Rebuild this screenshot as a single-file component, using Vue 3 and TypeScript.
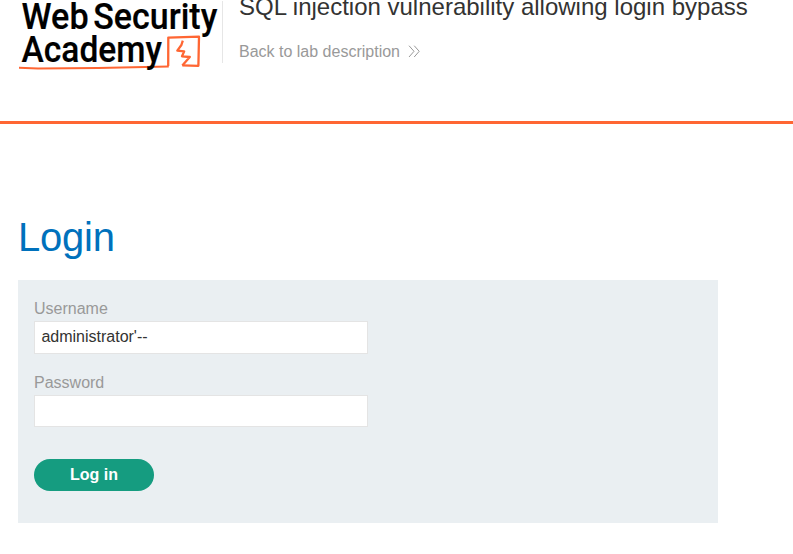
<script setup lang="ts">
import { ref } from 'vue'

const labTitle = 'SQL injection vulnerability allowing login bypass'
const username = ref("administrator'--")
const password = ref('')
</script>

<template>
  <div class="page">
    <header class="lab-header">
      <svg class="logo" width="204" height="76" viewBox="0 0 204 76" role="img" aria-label="Web Security Academy">
        <g class="logo-mark">
          <path d="M150.2 66 L150.3 37.6 L181 36.7 L180.4 65.8 L164.3 65.4" />
          <path class="underline" d="M1 67.8 L20 68.5 L80 68.1 L150.8 66.4" />
          <path class="bolt" d="M164.8 40.6 L163.4 45 L159.3 50.6 L166.2 51.4 L164 56.3 L171.8 57 L164.3 65.4" />
        </g>
        <g class="logo-text">
          <text x="3.6" y="29.3" textLength="67" lengthAdjust="spacingAndGlyphs">Web</text>
          <text x="75.3" y="29.3" textLength="124" lengthAdjust="spacingAndGlyphs">Security</text>
          <text x="3.6" y="62" textLength="140.4" lengthAdjust="spacingAndGlyphs">Academy</text>
        </g>
      </svg>
      <div class="title-block">
        <h2>{{ labTitle }}</h2>
        <a class="back-link">
          <span>Back to lab description</span>
          <svg width="14" height="13" viewBox="0 0 14 13">
            <path d="M1 0.7 L6 6.3 L1 12 M6.2 0.7 L11.2 6.3 L6.2 12" />
          </svg>
        </a>
      </div>
    </header>
    <main>
      <h1>Login</h1>
      <form class="login-form" @submit.prevent>
        <label for="username">Username</label>
        <input id="username" v-model="username" class="user" type="text" />
        <label for="password">Password</label>
        <input id="password" v-model="password" type="password" />
        <button type="submit">Log in</button>
      </form>
    </main>
  </div>
</template>

<style>
body {
  margin: 0;
  background: #fff;
}
</style>

<style scoped>
.page {
  height: 554px;
  overflow: hidden;
  font-family: "Liberation Sans", Arial, sans-serif;
  font-size: 16px;
  color: #333332;
}
.lab-header {
  display: flex;
  box-sizing: border-box;
  height: 124px;
  padding-left: 18px;
  border-bottom: 3px solid #ff6633;
}
.logo {
  flex: none;
}
.logo-text {
  font: 500 37.4px Roboto, "Liberation Sans", sans-serif;
  fill: #000;
  stroke: #000;
  stroke-width: 0.2;
}
.logo-mark path {
  fill: none;
  stroke: #ff6633;
  stroke-width: 2.3;
  stroke-linejoin: round;
}
.logo-mark .underline {
  stroke-width: 2;
}
.logo-mark .bolt {
  stroke-width: 2.3;
}
.title-block {
  height: 62px;
  margin-top: 1px;
  padding-left: 16px;
  border-left: 1px solid #e6e6e6;
}
h2 {
  margin: -8px 0 0;
  font-size: 24px;
  font-weight: 400;
  line-height: 28px;
  white-space: nowrap;
}
.back-link {
  display: flex;
  align-items: center;
  gap: 8px;
  margin-top: 22px;
  line-height: 18px;
  color: #999;
}
.back-link svg {
  margin-top: -2px;
}
.back-link path {
  fill: none;
  stroke: #999;
  stroke-width: 1;
}
main {
  padding: 90px 0 0 18px;
}
h1 {
  margin: 0;
  font-size: 40px;
  font-weight: 400;
  line-height: 46px;
  letter-spacing: -0.25px;
  color: #0071bc;
}
.login-form {
  display: flex;
  flex-direction: column;
  align-items: flex-start;
  box-sizing: border-box;
  width: 700px;
  height: 243px;
  margin-top: 20px;
  padding: 20px 16px;
  background: #eaeff2;
}
label {
  line-height: 18px;
  margin-bottom: 3px;
  color: #999;
}
input {
  box-sizing: border-box;
  width: 334px;
  height: 32px;
  padding: 0 6.4px;
  border: 1px solid #e4e4e4;
  border-radius: 0;
  outline: none;
  background: #fff;
  font: inherit;
  color: #333332;
}
.user {
  height: 33px;
  padding-bottom: 2px;
  margin-bottom: 20px;
}
button {
  width: 120px;
  height: 32px;
  margin-top: 32px;
  padding: 0 0 1px;
  border: 0;
  border-radius: 16px;
  background: #159c80;
  font: 700 16px "Liberation Sans", Arial, sans-serif;
  color: #fff;
}
</style>
